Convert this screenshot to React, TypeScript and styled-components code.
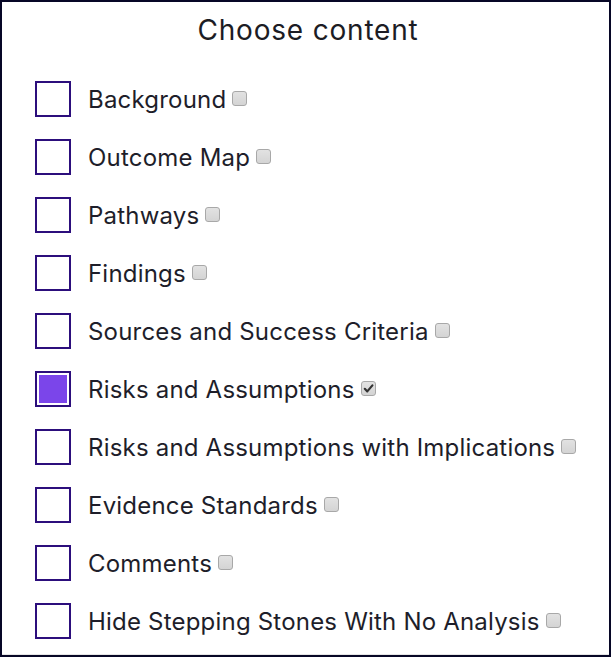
import { FC, useState } from "react";
import styled, { createGlobalStyle } from "styled-components";

const GlobalStyle = createGlobalStyle`
  html, body {
    margin: 0;
    padding: 0;
    background: #ededed;
  }
  body {
    font-family: Inter, "Liberation Sans", sans-serif;
  }
`;

const ITEMS = [
  "Background",
  "Outcome Map",
  "Pathways",
  "Findings",
  "Sources and Success Criteria",
  "Risks and Assumptions",
  "Risks and Assumptions with Implications",
  "Evidence Standards",
  "Comments",
  "Hide Stepping Stones With No Analysis",
];

interface RowProps {
  label: string;
  checked: boolean;
  onToggle: () => void;
}

const OptionRow: FC<RowProps> = ({ label, checked, onToggle }) => {
  return (
    <Row onClick={onToggle}>
      <BigBox>{checked && <BigFill />}</BigBox>
      <Label>{label}</Label>
      <SmallBox $checked={checked}>
        {checked && (
          <svg width="11" height="11" viewBox="0 0 11 11">
            <path
              d="M1.8 5.8 L4.3 8.4 L9.4 2.4"
              fill="none"
              stroke="#333"
              strokeWidth="2.2"
              strokeLinecap="round"
              strokeLinejoin="round"
            />
          </svg>
        )}
      </SmallBox>
    </Row>
  );
};

export default function App() {
  const [selected, setSelected] = useState<string[]>(["Risks and Assumptions"]);

  const toggle = (label: string) => {
    setSelected((prev) =>
      prev.includes(label) ? prev.filter((l) => l !== label) : [...prev, label]
    );
  };

  return (
    <>
      <GlobalStyle />
      <Frame>
        <Title>Choose content</Title>
        <List>
          {ITEMS.map((item) => (
            <OptionRow
              key={item}
              label={item}
              checked={selected.includes(item)}
              onToggle={() => toggle(item)}
            />
          ))}
        </List>
      </Frame>
    </>
  );
}

const Frame = styled.div`
  box-sizing: border-box;
  width: 611px;
  height: 657px;
  border: 2px solid #070726;
  background: #fff;
  box-shadow: inset 0 -1px 0 #e6e6e6;
  padding: 14px 0 0 33px;
`;

const Title = styled.div`
  font-size: 28px;
  letter-spacing: 0.8px;
  color: #1c1c24;
  text-align: center;
  padding-right: 28px;
  line-height: 28px;
  margin-bottom: 37px;
`;

const List = styled.div`
  display: flex;
  flex-direction: column;
  gap: 22px;
`;

const Row = styled.div`
  display: flex;
  align-items: center;
  height: 36px;
  cursor: pointer;
`;

const BigBox = styled.div`
  box-sizing: border-box;
  width: 36px;
  height: 36px;
  border: 2px solid #2c0e7c;
  padding: 2px;
  background: #fff;
  flex-shrink: 0;
`;

const BigFill = styled.div`
  width: 100%;
  height: 100%;
  background: #7b45ea;
`;

const Label = styled.span`
  margin-left: 17px;
  padding-top: 2px;
  font-size: 24px;
  letter-spacing: 0.2px;
  color: #1e1e2a;
  line-height: 34px;
`;

const SmallBox = styled.span<{ $checked: boolean }>`
  box-sizing: border-box;
  display: inline-flex;
  align-items: center;
  justify-content: center;
  width: 15px;
  height: 15px;
  margin-left: 6px;
  margin-bottom: 2px;
  border: 1px solid #a8a8a8;
  border-radius: 3px;
  background: linear-gradient(#e2e2e2, #d4d4d4);
`;
